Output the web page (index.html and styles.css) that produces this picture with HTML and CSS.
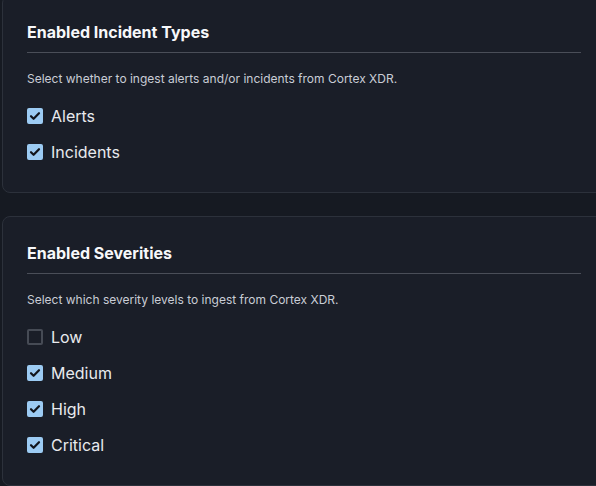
FILE: index.html
```html
<!DOCTYPE html>
<html lang="en">
<head>
<meta charset="utf-8">
<link rel="stylesheet" href="styles.css">
</head>
<body>
<div class="page">
  <section class="card card-first">
    <h2 class="card-title">Enabled Incident Types</h2>
    <p class="card-desc">Select whether to ingest alerts and/or incidents from Cortex XDR.</p>
    <div class="options">
      <label class="option"><span class="box checked"><svg viewBox="0 0 16 16"><path d="M4 8.2l2.6 2.6L12 5.2"/></svg></span><span class="label">Alerts</span></label>
      <label class="option"><span class="box checked"><svg viewBox="0 0 16 16"><path d="M4 8.2l2.6 2.6L12 5.2"/></svg></span><span class="label">Incidents</span></label>
    </div>
  </section>
  <section class="card">
    <h2 class="card-title">Enabled Severities</h2>
    <p class="card-desc">Select which severity levels to ingest from Cortex XDR.</p>
    <div class="options">
      <label class="option"><span class="box"></span><span class="label">Low</span></label>
      <label class="option"><span class="box checked"><svg viewBox="0 0 16 16"><path d="M4 8.2l2.6 2.6L12 5.2"/></svg></span><span class="label">Medium</span></label>
      <label class="option"><span class="box checked"><svg viewBox="0 0 16 16"><path d="M4 8.2l2.6 2.6L12 5.2"/></svg></span><span class="label">High</span></label>
      <label class="option"><span class="box checked"><svg viewBox="0 0 16 16"><path d="M4 8.2l2.6 2.6L12 5.2"/></svg></span><span class="label">Critical</span></label>
    </div>
  </section>
</div>
</body>
</html>
```
FILE: styles.css
```css
html, body {
  margin: 0;
  padding: 0;
  height: 100%;
  overflow: hidden;
  background: #161a22;
  font-family: Inter, "Noto Sans", sans-serif;
  color: #e8eaee;
}
.page {
  margin-top: -5px;
  padding-left: 2px;
  display: flex;
  flex-direction: column;
  gap: 23px;
}
.card {
  width: 604px;
  box-sizing: border-box;
  border: 1px solid #2c313b;
  border-radius: 8px;
  background: #1a1e28;
  padding: 24px 24px 28px;
}
.card-title {
  margin: 0;
  font-size: 16px;
  line-height: 24px;
  font-weight: 700;
  color: #f7f8fa;
  padding-bottom: 8px;
  border-bottom: 1px solid #4a4e58;
}
.card-desc {
  margin: 16px 0 0;
  font-size: 12px;
  line-height: 20px;
  color: #c9cdd6;
}
.options {
  margin-top: 15px;
  display: flex;
  flex-direction: column;
  gap: 12px;
}
.option {
  display: flex;
  align-items: center;
  gap: 8px;
  height: 24px;
}
.box {
  width: 16px;
  height: 16px;
  box-sizing: border-box;
  border: 2px solid #464b55;
  border-radius: 2px;
  display: flex;
  align-items: center;
  justify-content: center;
}
.box.checked {
  background: #9ccbf3;
  border-color: #9ccbf3;
}
.box svg {
  width: 16px;
  height: 16px;
  flex: none;
  fill: none;
  stroke: #12151c;
  stroke-width: 2.2;
  stroke-linecap: round;
  stroke-linejoin: round;
}
.label {
  font-size: 16px;
  line-height: 24px;
  color: #e8eaee;
}
```
